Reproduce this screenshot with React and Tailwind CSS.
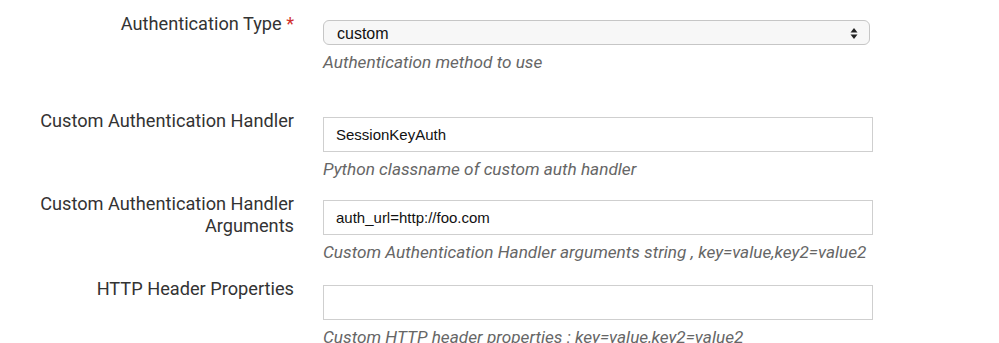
import { useState } from 'react';

const labelCls = "w-[294px] shrink-0 text-right text-[18.2px] leading-[22px] text-[#333] font-['Roboto',sans-serif]";
const helpCls = "mt-[7px] leading-5 text-[17.2px] italic text-[#666] font-['Roboto',sans-serif]";
const inputCls = "h-[35px] w-[550px] border-[1.5px] border-[#cfcfcf] bg-white px-3 text-[15px] text-[#111] font-['Liberation_Sans',Arial,sans-serif] outline-none";

const Field = ({ label, help, value, className }) => (
  <div className={`flex items-start ${className}`}>
    <label className={labelCls}>{label}</label>
    <div className="ml-[29px] flex flex-col pt-[7px]">
      <input className={inputCls} defaultValue={value} />
      <p className={helpCls}>{help}</p>
    </div>
  </div>
);

export default function App() {
  const [authType, setAuthType] = useState('custom');

  return (
    <div className="h-[343px] w-[999px] overflow-hidden bg-white pt-[13px]">
      {/* Authentication Type */}
      <div className="flex items-start mb-[38px]">
        <label className={labelCls}>
          Authentication Type <span className="text-[#d0312d]">*</span>
        </label>
        <div className="ml-[29px] flex flex-col pt-[7px]">
          <div className="relative h-[25px] w-[547px] rounded-[6px] border border-[#c6c6c6] bg-[#f7f7f7]">
            <select
              value={authType}
              onChange={(e) => setAuthType(e.target.value)}
              className="h-full w-full appearance-none bg-transparent pl-[13px] text-[16px] text-[#111] font-['Liberation_Sans',Arial,sans-serif] outline-none"
            >
              <option value="custom">custom</option>
              <option value="none">none</option>
            </select>
            <svg className="pointer-events-none absolute right-[11px] top-[7px]" width="8" height="11" viewBox="0 0 8 11">
              <path d="M4 0 L7.5 4.5 L0.5 4.5 Z" fill="#222" />
              <path d="M4 11 L7.5 6.5 L0.5 6.5 Z" fill="#222" />
            </svg>
          </div>
          <p className={helpCls}>Authentication method to use</p>
        </div>
      </div>

      <Field
        className="mb-[14px]"
        label="Custom Authentication Handler"
        value="SessionKeyAuth"
        help="Python classname of custom auth handler"
      />
      <Field
        className="mb-[16px]"
        label={<>Custom Authentication Handler<br />Arguments</>}
        value="auth_url=http://foo.com"
        help="Custom Authentication Handler arguments string , key=value,key2=value2"
      />
      <Field
        label="HTTP Header Properties"
        value=""
        help="Custom HTTP header properties : key=value,key2=value2"
      />
    </div>
  );
}
